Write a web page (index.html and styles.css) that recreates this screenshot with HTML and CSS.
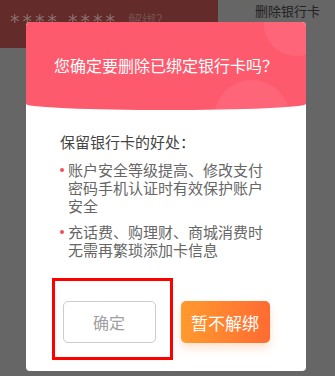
FILE: index.html
```html
<!DOCTYPE html>
<html lang="zh-CN">
<head>
    <meta charset="UTF-8">
    <meta name="viewport" content="width=device-width, initial-scale=1.0">
    <title>删除银行卡</title>
    <link rel="stylesheet" href="styles.css">
</head>
<body>
    <div class="page">
        <div class="topbar">
            <div class="bank-card">
                <span class="card-no">****</span>
                <span class="card-no">****</span>
                <span class="card-tag">解绑?</span>
            </div>
            <div class="topbar-title">删除银行卡</div>
        </div>
    </div>

    <div class="modal">
        <div class="modal-head">
            <h2>您确定要删除已绑定银行卡吗？</h2>
        </div>
        <div class="modal-body">
            <p class="lead">保留银行卡的好处：</p>
            <ul class="perks">
                <li>账户安全等级提高、修改支付密码手机认证时有效保护账户安全</li>
                <li>充话费、购理财、商城消费时无需再繁琐添加卡信息</li>
            </ul>
            <div class="actions">
                <button class="btn btn-ghost">确定</button>
                <button class="btn btn-primary">暂不解绑</button>
            </div>
        </div>
    </div>

    <div class="mark"></div>
</body>
</html>
```

FILE: styles.css
```css
/* Global */
body {
    margin: 0;
    width: 335px;
    height: 376px;
    overflow: hidden;
    position: relative;
    background: #666666;
    font-family: "Noto Sans CJK SC", "Noto Sans", sans-serif;
}

/* page behind the dialog */
.topbar {
    display: flex;
    align-items: flex-start;
}

.bank-card {
    width: 218px;
    height: 48px;
    background: #642b2b;
    display: flex;
    align-items: flex-start;
    padding: 9px 0 0 10px;
    box-sizing: border-box;
    filter: blur(0.5px);
}

.card-no {
    font-family: "DejaVu Sans", sans-serif;
    font-size: 19px;
    line-height: 24px;
    letter-spacing: 3px;
    color: #8c7272;
    margin-right: 8px;
}

.card-tag {
    margin: 2px 0 0 2px;
    font-size: 14px;
    line-height: 16px;
    color: #76504f;
}

.topbar-title {
    margin: 2px 0 0 37px;
    font-size: 13px;
    line-height: 17px;
    color: #222222;
}

/* dialog */
.modal {
    position: absolute;
    left: 26px;
    top: 22px;
    width: 280px;
    height: 349px;
    background: #ffffff;
    border-radius: 4px;
    overflow: hidden;
}

.modal-head {
    position: relative;
    height: 88px;
    background: #fe5a6e;
    border-radius: 4px 4px 50% 50% / 4px 4px 6px 6px;
    overflow: hidden;
    display: flex;
    align-items: center;
    justify-content: center;
}

.modal-head::before,
.modal-head::after {
    content: "";
    position: absolute;
    border-radius: 50%;
    background: rgba(255, 255, 255, 0.07);
}

.modal-head::before {
    width: 64px;
    height: 64px;
    right: -22px;
    top: -30px;
}

.modal-head::after {
    width: 76px;
    height: 76px;
    right: 16px;
    top: 58px;
}

.modal-head h2 {
    margin: 0 0 2px;
    font-size: 16px;
    font-weight: normal;
    line-height: 22px;
    color: #ffffff;
}

.modal-body {
    padding: 22px 34px 28px;
}

.lead {
    margin: 0 0 9px;
    font-size: 15px;
    line-height: 20px;
    color: #444444;
}

.perks {
    margin: 0;
    padding: 0;
    list-style: none;
}

.perks li {
    position: relative;
    padding-left: 8px;
    margin-bottom: 8px;
    font-size: 15px;
    line-height: 18px;
    color: #666666;
}

.perks li::before {
    content: "";
    position: absolute;
    left: 0;
    top: 7px;
    width: 4px;
    height: 4px;
    border-radius: 50%;
    background: #f5505a;
}

.actions {
    display: flex;
    justify-content: center;
    gap: 25px;
    margin-top: 42px;
}

.btn {
    height: 42px;
    border-radius: 5px;
    font-family: inherit;
    font-size: 16px;
    cursor: pointer;
}

.btn-ghost {
    width: 93px;
    background: #ffffff;
    border: 1px solid #cccccc;
    color: #a0a0a0;
}

.btn-primary {
    width: 89px;
    border: none;
    font-size: 17px;
    color: #ffffff;
    background: linear-gradient(90deg, #ff9a2e, #ff6b32);
    box-shadow: 0 5px 8px rgba(255, 140, 60, 0.25);
}

/* red annotation box */
.mark {
    position: absolute;
    left: 52px;
    top: 278px;
    width: 121px;
    height: 82px;
    border: 3px solid #ff0000;
    box-sizing: border-box;
}
```
